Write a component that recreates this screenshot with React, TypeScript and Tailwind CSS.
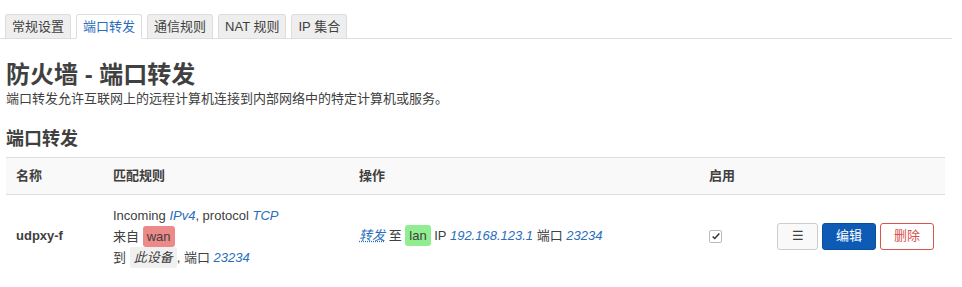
import React from "react";

const tabs = ["常规设置", "端口转发", "通信规则", "NAT 规则", "IP 集合"];

const Tabs = () => (
  <ul className="flex gap-[5px] border-b border-[#ddd] pl-[5px] pt-[14px] mr-[10px]">
    {tabs.map((t, i) =>
      i === 1 ? (
        <li
          key={t}
          className="-mb-px h-[25px] rounded-t-[3px] border border-[#ddd] border-b-white bg-white px-[6px] leading-[23px] text-[#2a6ebb]"
        >
          {t}
        </li>
      ) : (
        <li
          key={t}
          className="h-[24px] rounded-t-[3px] border border-b-0 border-[#ddd] bg-[#eee] px-[6px] leading-[23px] text-[#404040]"
        >
          {t}
        </li>
      )
    )}
  </ul>
);

const Link = ({ children }: { children: React.ReactNode }) => (
  <span className="italic text-[#2a6ebb]">{children}</span>
);

export default function App() {
  return (
    <div className="h-[287px] w-[962px] overflow-hidden bg-white font-['Liberation_Sans','Noto_Sans_CJK_SC',sans-serif] text-[13px] text-[#404040]">
      <Tabs />
      <div className="px-[6px]">
        <h2 className="mt-[22px] text-[24px] font-bold leading-[28px] text-[#404040]">防火墙 - 端口转发</h2>
        <p className="mt-[1px] leading-[18px]">端口转发允许互联网上的远程计算机连接到内部网络中的特定计算机或服务。</p>
        <h3 className="mt-[20px] text-[18px] font-bold leading-[22px]">端口转发</h3>
        <div className="mt-[7px] w-[939px]">
          <div className="flex h-[38px] items-center border-y border-[#ddd] bg-[#f9f9f9] font-bold">
            <div className="w-[107px] pl-[10px]">名称</div>
            <div className="w-[246px]">匹配规则</div>
            <div className="w-[350px]">操作</div>
            <div>启用</div>
          </div>
          <div className="flex h-[82px] items-center">
            <div className="w-[107px] pl-[10px] font-bold">udpxy-f</div>
            <div className="w-[246px] leading-[21px]">
              <div>
                Incoming <Link>IPv4</Link>, protocol <Link>TCP</Link>
              </div>
              <div>
                来自{" "}
                <span className="rounded-[3px] bg-[#ec8a8a] px-[4px] py-[3px] text-[#404040]">wan</span>
              </div>
              <div>
                到{" "}
                <span className="rounded-[3px] bg-[#f0f0f0] px-[4px] py-[3px] italic">此设备</span>, 端口{" "}
                <Link>23234</Link>
              </div>
            </div>
            <div className="w-[350px]">
              <span className="italic text-[#2a6ebb] underline decoration-dotted">转发</span> 至{" "}
              <span className="rounded-[3px] bg-[#90ee90] px-[4px] py-[3px]">lan</span> IP{" "}
              <Link>192.168.123.1</Link> 端口 <Link>23234</Link>
            </div>
            <div className="w-[68px]">
              <span className="flex h-[13px] w-[13px] items-center justify-center rounded-[2px] border border-[#bbb] bg-white">
                <svg viewBox="0 0 12 12" className="h-[10px] w-[10px]">
                  <path d="M2 6.5l2.5 2.5L10 3" fill="none" stroke="#333" strokeWidth="1.8" />
                </svg>
              </span>
            </div>
            <div className="flex gap-[4px]">
              <button className="h-[27px] w-[41px] rounded-[3px] border border-[#ccc] bg-[#f9f9f9] text-[#404040]">☰</button>
              <button className="h-[27px] w-[54px] rounded-[3px] border border-[#0a4f9e] bg-[#0d5bb5] text-white">编辑</button>
              <button className="h-[27px] w-[54px] rounded-[3px] border border-[#d9534f] bg-white text-[#d9534f]">删除</button>
            </div>
          </div>
        </div>
      </div>
    </div>
  );
}
